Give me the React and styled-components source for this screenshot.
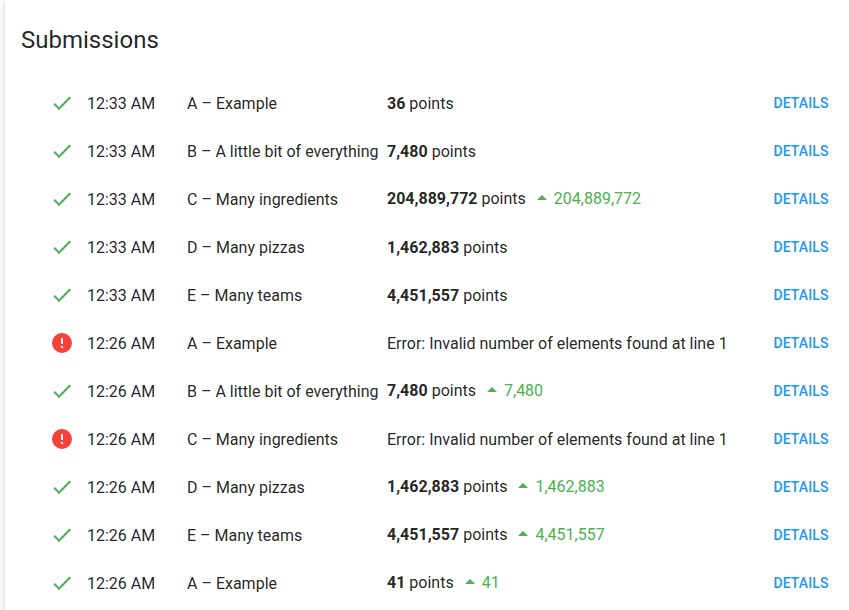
import React from "react";
import styled, { createGlobalStyle } from "styled-components";

const GlobalStyle = createGlobalStyle`
  * { box-sizing: border-box; }
  body { margin: 0; background: #fafafa; overflow: hidden; }
`;

const Page = styled.div`
  height: 610px;
  padding-left: 5px;
  overflow: hidden;
  font-family: Roboto, sans-serif;
  color: rgba(0, 0, 0, 0.87);
`;

const Card = styled.main`
  height: 640px;
  padding: 0 16px;
  background: #fff;
  box-shadow: 0 3px 1px -2px rgba(0, 0, 0, 0.2), 0 2px 2px rgba(0, 0, 0, 0.14), 0 1px 5px rgba(0, 0, 0, 0.12);
`;

const Title = styled.h1`
  margin: 0;
  padding-top: 24px;
  height: 79px;
  font-size: 24px;
  line-height: 32px;
  font-weight: 400;
`;

const List = styled.ul`
  margin: 0;
  padding: 0;
  list-style: none;
`;

const Row = styled.li`
  display: grid;
  grid-template-columns: 66px 100px 200px 1fr auto;
  align-items: center;
  height: 48px;
  font-size: 16px;
  line-height: 24px;
  white-space: nowrap;
`;

const StatusIcon = styled.svg`
  width: 24px;
  height: 24px;
  margin-left: 29px;
  fill: ${(p) => (p.$error ? "#f44336" : "#4caf50")};
`;

const Cell = styled.span`
  padding-top: 2px;
`;

const Result = styled(Cell)`
  display: flex;
  align-items: center;
  padding-top: ${(p) => (p.$improved ? "0" : "2px")};
`;

const Points = styled.strong`
  font-weight: 700;
  margin-right: 4px;
`;

const Gain = styled.span`
  display: flex;
  align-items: center;
  margin-left: 4px;
  color: #4caf50;
`;

const Caret = styled.svg`
  width: 24px;
  height: 24px;
  margin: -4px 0 0;
  fill: currentColor;
`;

const DetailsButton = styled.button`
  border: 0;
  padding: 0;
  margin-right: 4.5px;
  background: none;
  color: #2196f3;
  font: 500 14px/24px Roboto, sans-serif;
  letter-spacing: 0.1px;
  text-transform: uppercase;
`;

const CHECK = "M9 16.17L4.83 12l-1.42 1.41L9 19 21 7l-1.41-1.41z";
const ALERT = "M13,13H11V7H13M13,17H11V15H13M12,2A10,10 0 0,0 2,12A10,10 0 0,0 12,22A10,10 0 0,0 22,12A10,10 0 0,0 12,2Z";

const problems = {
  A: "Example",
  B: "A little bit of everything",
  C: "Many ingredients",
  D: "Many pizzas",
  E: "Many teams",
};

const lineError = "Error: Invalid number of elements found at line 1";

const submissions = [
  { time: "12:33 AM", id: "A", points: "36" },
  { time: "12:33 AM", id: "B", points: "7,480" },
  { time: "12:33 AM", id: "C", points: "204,889,772", gain: "204,889,772" },
  { time: "12:33 AM", id: "D", points: "1,462,883" },
  { time: "12:33 AM", id: "E", points: "4,451,557" },
  { time: "12:26 AM", id: "A", error: lineError },
  { time: "12:26 AM", id: "B", points: "7,480", gain: "7,480" },
  { time: "12:26 AM", id: "C", error: lineError },
  { time: "12:26 AM", id: "D", points: "1,462,883", gain: "1,462,883" },
  { time: "12:26 AM", id: "E", points: "4,451,557", gain: "4,451,557" },
  { time: "12:26 AM", id: "A", points: "41", gain: "41" },
];

function Submission({ time, id, points, gain, error }) {
  return (
    <Row>
      <StatusIcon viewBox="0 0 24 24" $error={Boolean(error)}>
        <path d={error ? ALERT : CHECK} />
      </StatusIcon>
      <Cell>{time}</Cell>
      <Cell>{id} – {problems[id]}</Cell>
      <Result $improved={Boolean(gain)}>
        {error || <><Points>{points}</Points>points</>}
        {gain && (
          <Gain>
            <Caret viewBox="0 0 24 24"><path d="M7,15L12,10L17,15H7Z" /></Caret>
            {gain}
          </Gain>
        )}
      </Result>
      <DetailsButton>Details</DetailsButton>
    </Row>
  );
}

export default function App() {
  return (
    <>
      <GlobalStyle />
      <Page>
        <Card>
          <Title>Submissions</Title>
          <List>
            {submissions.map((s, i) => <Submission key={i} {...s} />)}
          </List>
        </Card>
      </Page>
    </>
  );
}
